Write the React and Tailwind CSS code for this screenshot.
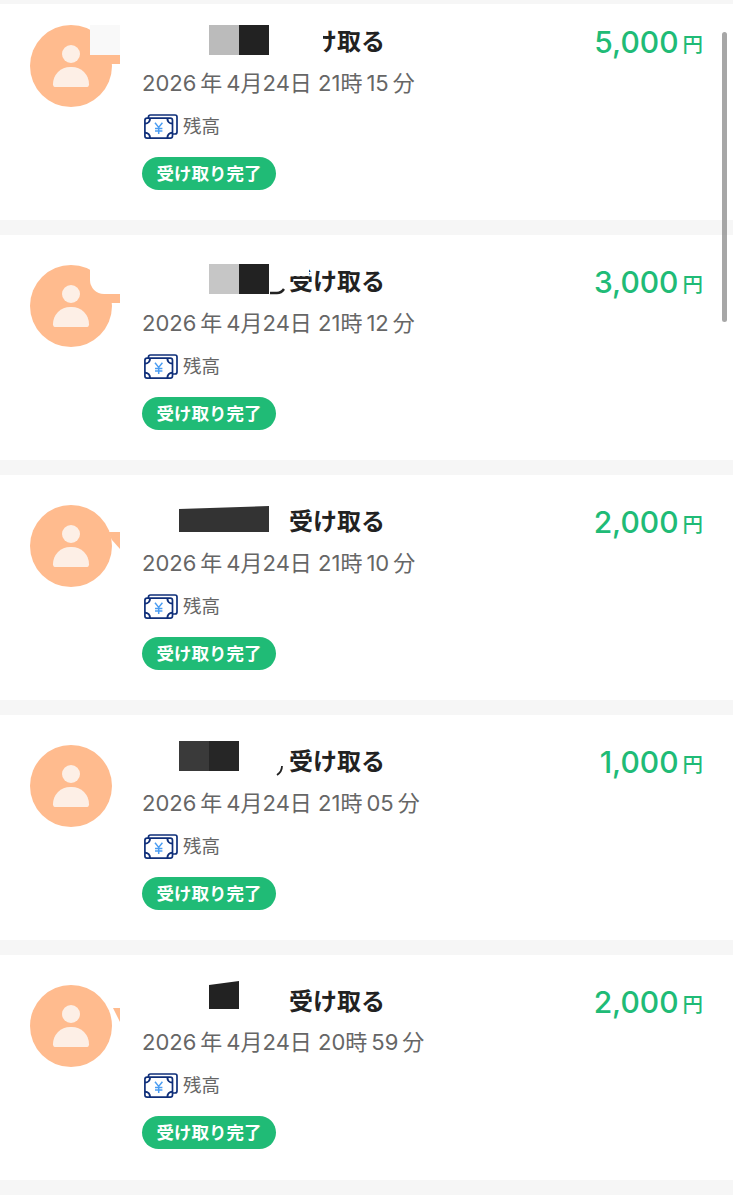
import React from "react";

const font = { fontFamily: '"Inter", "Noto Sans CJK JP", sans-serif' };

function MoneyIcon() {
    return (
        <svg width="34" height="26" viewBox="0 0 34 26" fill="none">
            <path d="M4.5 4V3C4.5 1.9 5.4 1 6.5 1H31C32.1 1 33 1.9 33 3V18C33 19.1 32.1 20 31 20H28.5" stroke="#0f2f7a" strokeWidth="1.7" />
            <rect x="0.9" y="4.2" width="27.6" height="20" rx="2.2" fill="#fff" stroke="#0f2f7a" strokeWidth="1.7" />
            <path d="M1 9.6C4 9.6 6 7.4 6 4.4M28.4 9.6C25.4 9.6 23.4 7.4 23.4 4.4M1 18.8C4 18.8 6 21 6 24M28.4 18.8C25.4 18.8 23.4 21 23.4 24" stroke="#0f2f7a" strokeWidth="2" />
            <path d="M11 8.8L14.7 13.4L18.4 8.8M14.7 13.4V20M11 14.4H18.4M11 17H18.4" stroke="#4b9df2" strokeWidth="1.5" />
        </svg>
    );
}

function Avatar({ children }) {
    return (
        <div className="relative w-[82px] h-[82px] shrink-0 ml-[30px] rounded-full bg-[#ffbb8e]">
            <div className="absolute left-[32px] top-[20px] w-[18px] h-[18px] rounded-full bg-[#fdefe6]"></div>
            <div className="absolute left-[23px] top-[42px] w-[36px] h-[20px] rounded-t-[18px] rounded-b-[3px] bg-[#fdefe6]"></div>
            {children}
        </div>
    );
}

function Row({ first, titleH = "h-[34px]", date, amount, avatarMask, titleMask }) {
    return (
        <div className={`flex bg-white ${first ? "h-[216px] pt-[21px]" : "h-[225px] pt-[30px]"}`}>
            <Avatar>{avatarMask}</Avatar>
            <div className="ml-[30px] w-[243px] shrink-0">
                <div className={`relative ${titleH} flex justify-end items-center text-[24px] leading-none font-semibold text-[#222]`}>
                    受け取る
                    {titleMask}
                </div>
                <div className="mt-[9px] h-[30px] flex items-center text-[22px] text-[#666] whitespace-nowrap">{date}</div>
                <div className="mt-[14px] h-[30px] flex items-center gap-[5px] ml-[2px] text-[18.5px] text-[#666]">
                    <MoneyIcon />
                    <span>残高</span>
                </div>
                <div className="mt-[15px] w-[134px] h-[33px] rounded-full bg-[#20bb76] flex items-center justify-center text-white text-[17.5px] font-semibold leading-none">
                    受け取り完了
                </div>
            </div>
            <div className="flex-1 flex justify-end items-start pr-[30px] text-[#20bb76] h-[34px]">
                <span className="text-[30px] leading-[34px] font-medium">{amount}</span>
                <span className="ml-[4px] mt-[8px] text-[20.5px] leading-[24px] font-medium">円</span>
            </div>
        </div>
    );
}

const d = (h, m) => `2026\u2009年\u20094月24日 ${h}時\u2009${m}\u2009分`;

export default function App() {
    return (
        <div className="relative w-[733px] h-[1200px] overflow-hidden bg-white" style={font}>
            <div className="flex flex-col gap-[15px] pt-[4px] pb-[15px] bg-[#f6f6f6]">
                <Row
                    first
                    date={d(21, 15)}
                    amount="5,000"
                    avatarMask={
                        <>
                            <div className="absolute left-[60px] top-0 w-[30px] h-[30px] bg-[#f9f9f9]"></div>
                            <div className="absolute left-[60px] top-[30px] w-[30px] h-[9px] bg-[#ffbb8e]"></div>
                        </>
                    }
                    titleMask={
                        <>
                            <div className="absolute left-[0px] top-0 w-[181px] h-[34px] bg-white"></div>
                            <div className="absolute left-[67px] top-[0px] w-[30px] h-[30px] bg-[#bbbbbb]"></div>
                            <div className="absolute left-[97px] top-[0px] w-[30px] h-[30px] bg-[#222222]"></div>
                        </>
                    }
                />
                <Row
                    date={d(21, 12)}
                    amount="3,000"
                    avatarMask={
                        <>
                            <div className="absolute left-[60px] top-0 w-[30px] h-[29px] rounded-bl-[14px] bg-white"></div>
                            <div className="absolute left-[66px] top-[29px] w-[24px] h-[9px] bg-[#ffbb8e]"></div>
                        </>
                    }
                    titleMask={
                        <>
                            <div className="absolute left-[0px] top-0 w-[130px] h-[34px] bg-white"></div>
                            <div className="absolute left-[127px] top-0 w-[40px] h-[11px] bg-white"></div>
                            <div className="absolute left-[67px] top-[-1px] w-[30px] h-[30px] bg-[#c6c6c6]"></div>
                            <div className="absolute left-[97px] top-[-1px] w-[30px] h-[30px] bg-[#222222]"></div>
                            <svg className="absolute left-[127px] top-[22px]" width="16" height="8" viewBox="0 0 16 8" fill="none">
                                <path d="M1 6H8C11 6 13 5 15 2" stroke="#222222" strokeWidth="2.5" />
                            </svg>
                        </>
                    }
                />
                <Row
                    date={d(21, 10)}
                    amount="2,000"
                    avatarMask={
                        <svg className="absolute left-[78px] top-[27px]" width="12" height="17" viewBox="0 0 12 17">
                            <path d="M0 0L12 0V17L4 8Z" fill="#ffbb8e" />
                        </svg>
                    }
                    titleMask={
                        <svg className="absolute left-[37px] top-[0px]" width="90" height="28" viewBox="0 0 90 28">
                            <path d="M0 4L90 1V27H0Z" fill="#333333" />
                        </svg>
                    }
                />
                <Row
                    date={d(21, "05")}
                    amount="1,000"
                    avatarMask={null}
                    titleMask={
                        <>
                            <div className="absolute left-[37px] top-[-4px] w-[30px] h-[30px] bg-[#3a3a3a]"></div>
                            <div className="absolute left-[67px] top-[-4px] w-[30px] h-[30px] bg-[#262626]"></div>
                            <svg className="absolute left-[134px] top-[20px]" width="7" height="11" viewBox="0 0 7 11" fill="none">
                                <path d="M6 1C6 5 4 8 1 10" stroke="#222222" strokeWidth="1.8" />
                            </svg>
                        </>
                    }
                />
                <Row
                    titleH="h-[33px]"
                    date={d(20, 59)}
                    amount="2,000"
                    avatarMask={
                        <svg className="absolute left-[83px] top-[23px]" width="7" height="14" viewBox="0 0 7 14">
                            <path d="M0 0H7V14Z" fill="#ffbb8e" />
                        </svg>
                    }
                    titleMask={
                        <svg className="absolute left-[67px] top-[-4px]" width="30" height="29" viewBox="0 0 30 29">
                            <path d="M0 4L30 0V28H0Z" fill="#222222" />
                        </svg>
                    }
                />
            </div>
            <div className="absolute left-[722px] top-[32px] w-[5px] h-[290px] rounded-full bg-[#8a8a8a]/75"></div>
        </div>
    );
}
